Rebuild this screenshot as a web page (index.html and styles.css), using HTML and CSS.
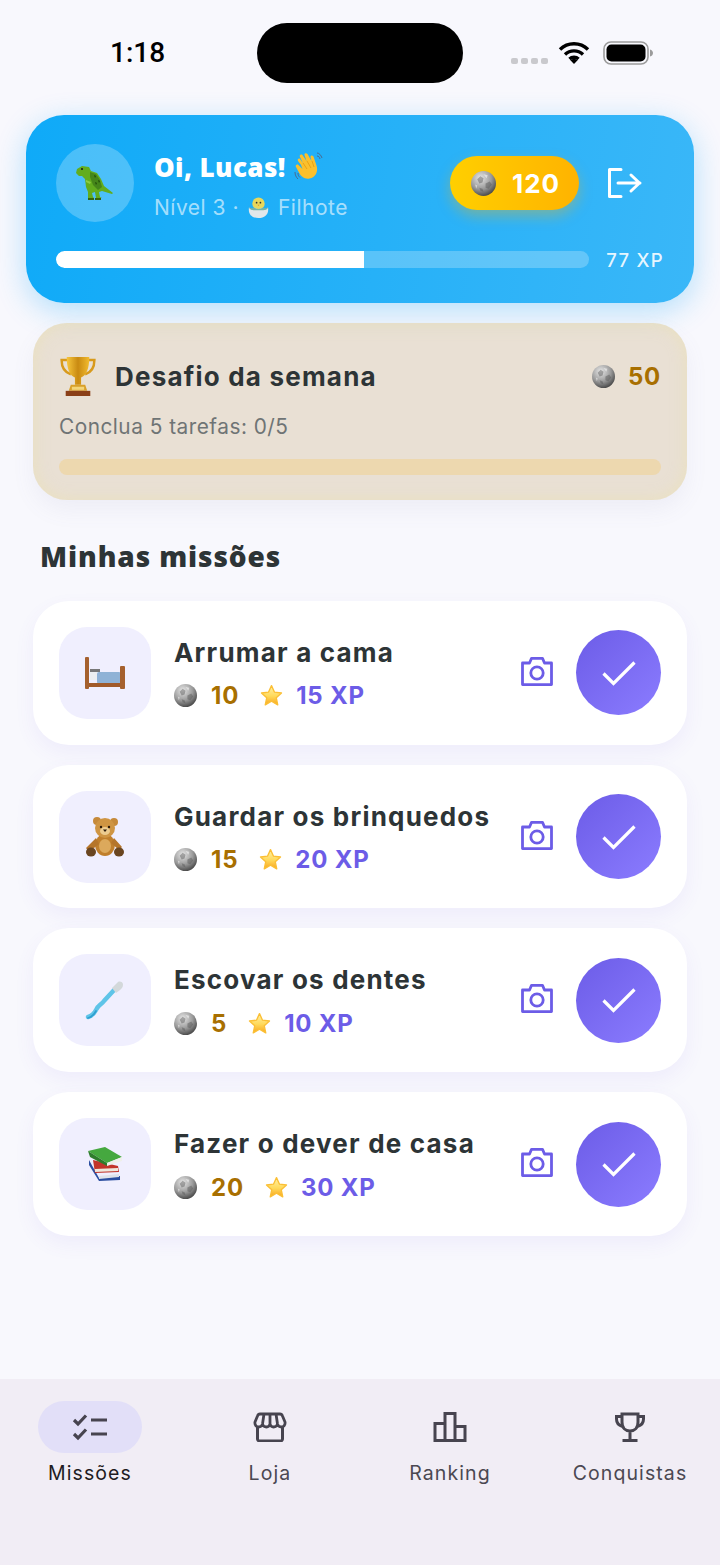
FILE: index.html
```html
<!DOCTYPE html>
<html lang="pt-BR">
<head>
    <meta charset="UTF-8">
    <meta name="viewport" content="width=device-width, initial-scale=1.0">
    <title>Minhas missões</title>
    <link rel="stylesheet" href="styles.css">
</head>
<body>
    <svg class="defs" aria-hidden="true">
        <defs>
            <radialGradient id="coinFill" cx="38%" cy="28%" r="80%">
                <stop offset="0" stop-color="#e6e6e6"/>
                <stop offset="0.55" stop-color="#9a9a9a"/>
                <stop offset="1" stop-color="#3a3a3a"/>
            </radialGradient>
            <linearGradient id="starFill" x1="0" y1="0" x2="0" y2="1">
                <stop offset="0" stop-color="#fff2a8"/>
                <stop offset="0.55" stop-color="#ffd95a"/>
                <stop offset="1" stop-color="#f8a51e"/>
            </linearGradient>
            <linearGradient id="goldFill" x1="0" y1="0" x2="1" y2="0">
                <stop offset="0" stop-color="#f7c63c"/>
                <stop offset="0.5" stop-color="#c98a12"/>
                <stop offset="1" stop-color="#f2bb2e"/>
            </linearGradient>
        </defs>
        <symbol id="coin" viewBox="0 0 24 24">
            <circle cx="12" cy="12" r="12" fill="url(#coinFill)"/>
            <path d="M6 8l3-3 3 2-1 4-3 1zM14 12l4-2 2 3-3 4-3-1zM8 16l3 1 1 3-3-1z" fill="#555" opacity=".45"/>
            <path d="M12 3l4 1-1 3zM4 13l2 1-1 3z" fill="#fff" opacity=".5"/>
        </symbol>
        <symbol id="star" viewBox="0 0 24 24">
            <path d="M12 2.500l2.900 6.300 6.700.8-5 4.600 1.400 6.800-6-3.500-6 3.500 1.400-6.800-5-4.600 6.700-.8z" fill="url(#starFill)" stroke="#fbbf35" stroke-width="1.300" stroke-linejoin="round"/>
        </symbol>
        <symbol id="camera" viewBox="0 0 34 30">
            <path d="M2.500 6h7l2-4.600h11l2 4.600h7v21.600h-29z" fill="none" stroke="#6c5ce7" stroke-width="2.800" stroke-linejoin="round"/>
            <circle cx="17" cy="16" r="6.200" fill="none" stroke="#6c5ce7" stroke-width="2.800"/>
        </symbol>
        <symbol id="check" viewBox="0 0 36 28">
            <path d="M2.500 14.500l10 10 21-21" fill="none" stroke="#fff" stroke-width="3.200"/>
        </symbol>
    </svg>

    <div class="status-bar">
        <div class="time">1:18</div>
        <div class="island"></div>
        <div class="status-icons">
            <div class="signal"><span></span><span></span><span></span><span></span></div>
            <svg class="wifi" viewBox="0 0 32 23">
                <path d="M2 8.500a20 20 0 0 1 28 0M7 13.500a13 13 0 0 1 18 0M11.500 18a6.500 6.500 0 0 1 9 0" fill="none" stroke="#000" stroke-width="3.400"/>
                <path d="M16 23l-3.600-3.800a5 5 0 0 1 7.200 0z"/>
            </svg>
            <svg class="battery" viewBox="0 0 50 24">
                <rect x="1" y="1" width="44" height="22" rx="7" fill="none" stroke="#9b9b9b" stroke-width="1.600"/>
                <rect x="3.500" y="3.500" width="39" height="17" rx="5"/>
                <path d="M47 8.500c2 .5 3 2 3 3.500s-1 3-3 3.500z" fill="#9b9b9b"/>
            </svg>
        </div>
    </div>

    <div class="hero">
        <div class="hero-top">
            <div class="avatar">
                <svg class="trex" viewBox="0 0 40 34">
                    <path d="M2 3l5-3 7 1 2 4 6 2 4 6 3 7 9 7-1 1-10-3-3 1 1 5 2 1h-6l-1-6-3 1 1 4 1 1h-6l0-6-2-5-1-8-3-3-3 0-3-3z" fill="#62ad1e"/>
                    <path d="M15 6l6 2 4 6 2 7-4 3-5-5-3-8z" fill="#45861a"/>
                    <path d="M19 9l2 1-1 2zM23 14l2 1-1 2zM20 16l2 1-1 2z" fill="#1f4a08"/>
                    <path d="M11 14l5 2-1 2-4-2z" fill="#8ccc44"/>
                    <circle cx="7" cy="3" r=".9" fill="#102"/>
                    <path d="M13 32h6v2h-6zM20 32h6v2h-6z" fill="#35640e"/>
                </svg>
            </div>
            <div class="hero-info">
                <div class="hero-name">
                    <span>Oi, Lucas!</span>
                    <svg class="wave" viewBox="0 0 30 30">
                        <path d="M7 13L4 9c-1-2 1-3 2-2l3 4-3-6c-1-2 1-3 2.500-2l4 6-2-6c-.5-2 2-2.500 3-1l4 7-1-4c0-2 2-2 3-.5l3 9c2 6-1 12-7 13-5 1-8-2-10-5L2 15c-1-2 1-3 2.500-2l4 4z" fill="#fbc02d"/>
                        <path d="M9 11l4 6M13 9l4 7M18 9l2 6" stroke="#e39a12" stroke-width=".8" fill="none"/>
                        <path d="M1 20c0 3 1 5 3 7M4 21c0 2 .5 3 2 4.500M23 1c2 0 4 2 5 5M23 4c1.500 0 2.500 1 3 3" stroke="#4a6a90" stroke-width="1" fill="none"/>
                    </svg>
                </div>
                <div class="hero-level">
                    <span>Nível 3 ·</span>
                    <svg class="chick" viewBox="0 0 22 22">
                        <circle cx="11" cy="7" r="6.500" fill="#e9d85a"/>
                        <circle cx="9" cy="6" r=".9" fill="#333"/>
                        <circle cx="13" cy="6" r=".9" fill="#333"/>
                        <path d="M10 8h2l-1 1.500z" fill="#e8862a"/>
                        <path d="M1 11l3 2 3-2 4 2 4-2 3 2 3-2c1 7-3 11-10 11S0 18 1 11z" fill="#e2e7ea"/>
                        <path d="M1 11c3 1 4 1 6 0 2 2 6 2 8 0 2 1 4 1 6 0-1 3-5 3-10 3s-9 0-10-3z" fill="#76b5a5"/>
                    </svg>
                    <span>Filhote</span>
                </div>
            </div>
            <div class="coin-pill">
                <svg class="coin-big"><use href="#coin"/></svg>
                <span>120</span>
            </div>
            <svg class="logout" viewBox="0 0 34 30">
                <path d="M13 1.500H1.500v27H13M10 15h22M23 7l8.500 8-8.500 8" fill="none" stroke="#fff" stroke-width="3" stroke-linejoin="round" stroke-linecap="round"/>
            </svg>
        </div>
        <div class="hero-progress">
            <div class="track"><div class="fill" style="width: 57.7%"></div></div>
            <div class="xp-label">77 XP</div>
        </div>
    </div>

    <div class="challenge">
        <div class="challenge-top">
            <svg class="cup" viewBox="0 0 36 40">
                <path d="M8 4H2c0 8 3 12 9 14M28 4h6c0 8-3 12-9 14" fill="none" stroke="#d89a1c" stroke-width="2.400"/>
                <path d="M7 1h22c0 12-3 18-8 20v7h-6v-7C10 19 7 13 7 1z" fill="url(#goldFill)"/>
                <path d="M11 28h14l2 6H9z" fill="#d9a02a"/>
                <path d="M6 34h24v5H6z" fill="#8a3f17"/>
                <path d="M12 30h12v3H12z" fill="#f3d57a"/>
            </svg>
            <div class="challenge-title">Desafio da semana</div>
            <div class="challenge-reward">
                <svg class="coin"><use href="#coin"/></svg>
                <span>50</span>
            </div>
        </div>
        <div class="challenge-text">Conclua 5 tarefas: 0/5</div>
        <div class="challenge-bar"></div>
    </div>

    <h2 class="section-title">Minhas missões</h2>

    <div class="missions">
        <div class="mission">
            <div class="mission-icon">
                <svg class="bed" viewBox="0 0 42 34">
                    <rect x="6" y="13" width="10" height="4" fill="#777"/>
                    <rect x="6" y="16" width="10" height="8" fill="#eceff1"/>
                    <rect x="13" y="16" width="24" height="12" rx="2" fill="#8fb2d6"/>
                    <rect x="4" y="27" width="34" height="4" fill="#a15a2a"/>
                    <rect x="1" y="1" width="4" height="32" rx="1" fill="#a5602e"/>
                    <rect x="36" y="10" width="5" height="23" rx="1" fill="#a5602e"/>
                </svg>
            </div>
            <div class="mission-info">
                <div class="mission-title">Arrumar a cama</div>
                <div class="mission-meta">
                    <svg class="coin"><use href="#coin"/></svg>
                    <span class="coins">10</span>
                    <svg class="star"><use href="#star"/></svg>
                    <span class="xp">15 XP</span>
                </div>
            </div>
            <svg class="camera"><use href="#camera"/></svg>
            <div class="done-btn"><svg class="check"><use href="#check"/></svg></div>
        </div>

        <div class="mission">
            <div class="mission-icon">
                <svg class="emoji" viewBox="0 0 40 40">
                    <circle cx="12" cy="4" r="4" fill="#c68a3a"/>
                    <circle cx="29" cy="5" r="4" fill="#c68a3a"/>
                    <ellipse cx="20" cy="28" rx="10" ry="11" fill="#c07f2c"/>
                    <ellipse cx="20" cy="29" rx="6" ry="7" fill="#dca95c"/>
                    <path d="M11 21L1 31l3 4 10-8zM29 21l8 9-3 3-8-7z" fill="#b5752a"/>
                    <circle cx="20" cy="11" r="10" fill="#cf9543"/>
                    <ellipse cx="20" cy="14" rx="5" ry="4" fill="#eccb8f"/>
                    <circle cx="16" cy="10" r="1.200" fill="#2a1a0c"/>
                    <circle cx="24" cy="10" r="1.200" fill="#2a1a0c"/>
                    <path d="M18 12.500h4L20 15z" fill="#2a1a0c"/>
                    <ellipse cx="6" cy="35" rx="5" ry="4.500" fill="#6a4520"/>
                    <ellipse cx="34" cy="35" rx="5" ry="4.500" fill="#6a4520"/>
                </svg>
            </div>
            <div class="mission-info">
                <div class="mission-title">Guardar os brinquedos</div>
                <div class="mission-meta">
                    <svg class="coin"><use href="#coin"/></svg>
                    <span class="coins">15</span>
                    <svg class="star"><use href="#star"/></svg>
                    <span class="xp">20 XP</span>
                </div>
            </div>
            <svg class="camera"><use href="#camera"/></svg>
            <div class="done-btn"><svg class="check"><use href="#check"/></svg></div>
        </div>

        <div class="mission">
            <div class="mission-icon">
                <svg class="emoji" viewBox="0 0 40 40">
                    <path d="M3 37c4-1 6-3 8-7 2-5 5-5 8-9l11-12" fill="none" stroke="#5fc4e8" stroke-width="4.400" stroke-linecap="round"/>
                    <path d="M3 38c4-1 6-3 8-7" fill="none" stroke="#2f9fd0" stroke-width="1.800" stroke-linecap="round"/>
                    <path d="M27 8l6-6c2-1 5 0 5 2.500s-1 3.500-3 5.500l-4 3z" fill="#d3d8da"/>
                </svg>
            </div>
            <div class="mission-info">
                <div class="mission-title">Escovar os dentes</div>
                <div class="mission-meta">
                    <svg class="coin"><use href="#coin"/></svg>
                    <span class="coins">5</span>
                    <svg class="star"><use href="#star"/></svg>
                    <span class="xp">10 XP</span>
                </div>
            </div>
            <svg class="camera"><use href="#camera"/></svg>
            <div class="done-btn"><svg class="check"><use href="#check"/></svg></div>
        </div>

        <div class="mission">
            <div class="mission-icon">
                <svg class="books" viewBox="0 0 34 34">
                    <path d="M1 13l10 18 21-2v4l-21 1L1 18z" fill="#2b4ea0"/>
                    <path d="M11 29l20-2v3l-20 2z" fill="#dfe3ea"/>
                    <path d="M5 13l25 6 1 6-24 1z" fill="#c2352b"/>
                    <path d="M7 22l23-1v3L7 25z" fill="#efe8dc"/>
                    <path d="M0 4l17-4 17 10-15 6z" fill="#45a83f"/>
                    <path d="M0 4l19 12v3L2 10z" fill="#2e7d2c"/>
                    <path d="M19 16l15-6v4l-15 5z" fill="#eef0ea"/>
                </svg>
            </div>
            <div class="mission-info">
                <div class="mission-title">Fazer o dever de casa</div>
                <div class="mission-meta">
                    <svg class="coin"><use href="#coin"/></svg>
                    <span class="coins">20</span>
                    <svg class="star"><use href="#star"/></svg>
                    <span class="xp">30 XP</span>
                </div>
            </div>
            <svg class="camera"><use href="#camera"/></svg>
            <div class="done-btn"><svg class="check"><use href="#check"/></svg></div>
        </div>
    </div>

    <div class="bottom-nav">
        <div class="nav-item active">
            <div class="nav-pill">
                <svg class="nav-icon" viewBox="0 0 36 30">
                    <path d="M2 8l4 4 8-8.500M2 22l4 4 8-8.500" fill="none" stroke="#47444f" stroke-width="3.200"/>
                    <path d="M19 8h16M19 22h16" fill="none" stroke="#47444f" stroke-width="3"/>
                </svg>
            </div>
            <div class="nav-label">Missões</div>
        </div>
        <div class="nav-item">
            <div class="nav-pill">
                <svg class="nav-icon" viewBox="0 0 36 30">
                    <path d="M5.500 14v13c0 1 1 2 2 2h21c1 0 2-1 2-2V14" fill="none" stroke="#47444f" stroke-width="3"/>
                    <path d="M8 2h20c1 0 2 .5 2.500 2L33 10c.5 3-1.500 5-3.500 5s-3.500-1-4-3c-.5 2-2.500 3-4 3s-3-1-3.500-3c-.5 2-2 3-3.500 3s-3.500-1-4-3c-.5 2-2 3-4 3S2.500 13 3 10l2.500-6C6 2.500 7 2 8 2zM12 2l-1.500 10M18 2v10M24 2l1.500 10" fill="none" stroke="#47444f" stroke-width="2.800" stroke-linejoin="round"/>
                </svg>
            </div>
            <div class="nav-label">Loja</div>
        </div>
        <div class="nav-item">
            <div class="nav-pill">
                <svg class="nav-icon" viewBox="0 0 36 30">
                    <path d="M3 11.500h10v17H3zM13 1.500h10v27H13zM23 14.500h10v14H23z" fill="none" stroke="#47444f" stroke-width="3"/>
                </svg>
            </div>
            <div class="nav-label">Ranking</div>
        </div>
        <div class="nav-item">
            <div class="nav-pill">
                <svg class="nav-icon" viewBox="0 0 36 30">
                    <path d="M10 2h16v8c0 6-3.500 9-8 9s-8-3-8-9zM10 4.500H4.500v2.500c0 4 2.500 6.500 6 7.500M26 4.500h5.500v2.500c0 4-2.500 6.500-6 7.500M18 19v9M10.500 28.500h15" fill="none" stroke="#47444f" stroke-width="3"/>
                </svg>
            </div>
            <div class="nav-label">Conquistas</div>
        </div>
    </div>
</body>
</html>
```

FILE: styles.css
```css
* {
    box-sizing: border-box;
}
body {
    margin: 0;
    width: 720px;
    height: 1565px;
    display: flex;
    flex-direction: column;
    overflow: hidden;
    background-color: #f8f8fd;
    color: #2d3436;
    font-family: Inter, "Noto Sans", sans-serif;
}
.defs {
    position: absolute;
    width: 0;
    height: 0;
}

/* status bar */
.status-bar {
    height: 115px;
    flex-shrink: 0;
    display: grid;
    grid-template-columns: 257px 206px 257px;
    padding-top: 23px;
}
.time {
    padding-left: 110px;
    height: 60px;
    line-height: 60px;
    font-family: Roboto, sans-serif;
    font-size: 28px;
    font-weight: 500;
    color: #000;
}
.island {
    height: 60px;
    border-radius: 30px;
    background-color: #000;
}
.status-icons {
    display: flex;
    align-items: flex-start;
    padding-left: 48px;
    padding-top: 18px;
}
.signal {
    display: flex;
    gap: 3px;
    margin-top: 17px;
    margin-right: 10px;
}
.signal span {
    width: 7px;
    height: 6px;
    border-radius: 2px;
    background-color: #c9c9cd;
}
.wifi {
    width: 32px;
    height: 23px;
    margin-right: 13px;
}
.battery {
    width: 50px;
    height: 24px;
}

/* top card */
.hero {
    flex-shrink: 0;
    height: 188px;
    margin: 0 26px;
    padding: 29px 30px 0;
    border-radius: 38px;
    background: linear-gradient(100deg, #0faaf8, #3ab7f8);
    box-shadow: 0 8px 30px rgba(20, 165, 250, 0.3);
}
.hero-top {
    display: flex;
    align-items: center;
    height: 78px;
}
.avatar {
    width: 78px;
    height: 78px;
    flex-shrink: 0;
    display: flex;
    align-items: center;
    justify-content: center;
    border-radius: 50%;
    background-color: rgba(255, 255, 255, 0.24);
}
.trex {
    width: 40px;
    height: 34px;
}
.hero-info {
    flex: 1;
    margin-left: 20px;
    padding-top: 7px;
}
.hero-name {
    display: flex;
    align-items: center;
    gap: 8px;
    height: 32px;
    margin-top: -2px;
    font-family: "Open Sans", sans-serif;
    font-size: 26px;
    font-weight: 800;
    letter-spacing: 0.4px;
    color: #fff;
}
.wave {
    width: 30px;
    height: 30px;
}
.hero-level {
    display: flex;
    align-items: center;
    gap: 9px;
    margin-top: 11px;
    height: 26px;
    font-size: 21px;
    letter-spacing: 0.5px;
    color: rgba(255, 255, 255, 0.62);
}
.chick {
    width: 21px;
    height: 21px;
}
.coin-pill {
    display: flex;
    align-items: center;
    gap: 16px;
    width: 129px;
    height: 54px;
    padding-left: 21px;
    border-radius: 27px;
    background: linear-gradient(90deg, #ffcf00, #ffb300);
    box-shadow: 0 6px 14px rgba(255, 179, 0, 0.35);
    font-size: 26px;
    font-weight: 700;
    letter-spacing: 1px;
    color: #fff;
}
.coin-big {
    width: 25px;
    height: 25px;
}
.logout {
    width: 34px;
    height: 30px;
    margin-left: 29px;
    margin-right: 22px;
}
.hero-progress {
    display: flex;
    align-items: center;
    margin-top: 26.5px;
}
.track {
    width: 534px;
    height: 17px;
    border-radius: 9px;
    overflow: hidden;
    background-color: rgba(255, 255, 255, 0.24);
}
.fill {
    height: 100%;
    background-color: #fff;
    border-radius: 9px 0 0 9px;
}
.xp-label {
    margin-left: 17px;
    font-size: 18.5px;
    font-weight: 500;
    letter-spacing: 1.3px;
    color: rgba(255, 255, 255, 0.9);
    white-space: nowrap;
}

/* weekly challenge */
.challenge {
    flex-shrink: 0;
    height: 177px;
    margin: 20px 33px 0;
    padding: 32px 26px 0;
    border-radius: 34px;
    background-color: rgba(223, 208, 185, 0.6);
    box-shadow: inset 0 0 16px rgba(235, 225, 180, 0.7), 0 10px 22px rgba(120, 120, 170, 0.08);
}
.challenge-top {
    display: flex;
    align-items: center;
    height: 42px;
}
.cup {
    width: 38px;
    height: 41px;
}
.challenge-title {
    flex: 1;
    margin-left: 18px;
    font-size: 26px;
    font-weight: 700;
    letter-spacing: 1.2px;
    color: #2d3436;
}
.challenge-reward {
    display: flex;
    align-items: center;
    gap: 13px;
    font-size: 24px;
    font-weight: 700;
    letter-spacing: 0.8px;
    color: #a86f00;
}
.challenge-text {
    margin-top: 17px;
    font-size: 20.8px;
    letter-spacing: 0.5px;
    color: #6f7475;
}
.challenge-bar {
    height: 16px;
    margin-top: 20px;
    border-radius: 8px;
    background-color: rgba(240, 210, 150, 0.6);
}
.coin {
    width: 23px;
    height: 23px;
    flex-shrink: 0;
}

.section-title {
    margin: 37px 0 0 40px;
    height: 38px;
    line-height: 38px;
    font-family: "Open Sans", sans-serif;
    font-size: 28px;
    font-weight: 800;
    letter-spacing: 0.9px;
    color: #2d3436;
}

/* missions */
.missions {
    display: flex;
    flex-direction: column;
    gap: 20px;
    margin: 25.95px 33px 0;
}
.mission {
    display: flex;
    align-items: center;
    height: 143.75px;
    padding: 0 26px;
    border-radius: 36px;
    background-color: #fff;
    box-shadow: 0 8px 20px rgba(108, 92, 231, 0.07);
}
.mission-icon {
    width: 92px;
    height: 92px;
    flex-shrink: 0;
    display: flex;
    align-items: center;
    justify-content: center;
    border-radius: 28px;
    background-color: #f0effe;
}
.emoji {
    width: 40px;
    height: 40px;
}
.bed {
    width: 42px;
    height: 34px;
}
.books {
    width: 34px;
    height: 34px;
}
.mission-info {
    flex: 1;
    margin-left: 23px;
    min-width: 0;
    padding-top: 2px;
}
.mission-title {
    font-size: 26px;
    font-weight: 700;
    letter-spacing: 1.2px;
    line-height: 30px;
    white-space: nowrap;
    color: #2d3436;
}
.mission-meta {
    display: flex;
    align-items: center;
    margin-top: 14px;
    height: 28px;
    font-size: 24px;
    font-weight: 700;
    letter-spacing: 0.8px;
}
.coins {
    margin-left: 14px;
    color: #a86f00;
}
.star {
    width: 25px;
    height: 25px;
    margin-left: 20px;
}
.xp {
    margin-left: 12px;
    color: #6c5ce7;
}
.camera {
    width: 34px;
    height: 30px;
    flex-shrink: 0;
    margin-right: 22px;
    margin-top: -2px;
}
.done-btn {
    width: 85px;
    height: 85px;
    flex-shrink: 0;
    display: flex;
    align-items: center;
    justify-content: center;
    border-radius: 50%;
    background: linear-gradient(135deg, #6c5ce7, #8b7cff);
}
.check {
    width: 36px;
    height: 28px;
}

/* bottom tabs */
.bottom-nav {
    margin-top: auto;
    height: 186px;
    flex-shrink: 0;
    display: grid;
    grid-template-columns: repeat(4, 1fr);
    padding-top: 22px;
    background-color: #f1edf5;
}
.nav-item {
    display: flex;
    flex-direction: column;
    align-items: center;
}
.nav-pill {
    width: 104px;
    height: 52px;
    display: flex;
    align-items: center;
    justify-content: center;
    border-radius: 26px;
}
.active .nav-pill {
    background-color: #e2dff8;
}
.nav-icon {
    width: 36px;
    height: 30px;
}
.nav-label {
    margin-top: 8px;
    font-size: 19.5px;
    letter-spacing: 1.1px;
    color: #4b4852;
}
.active .nav-label {
    color: #1e1b22;
}
```
